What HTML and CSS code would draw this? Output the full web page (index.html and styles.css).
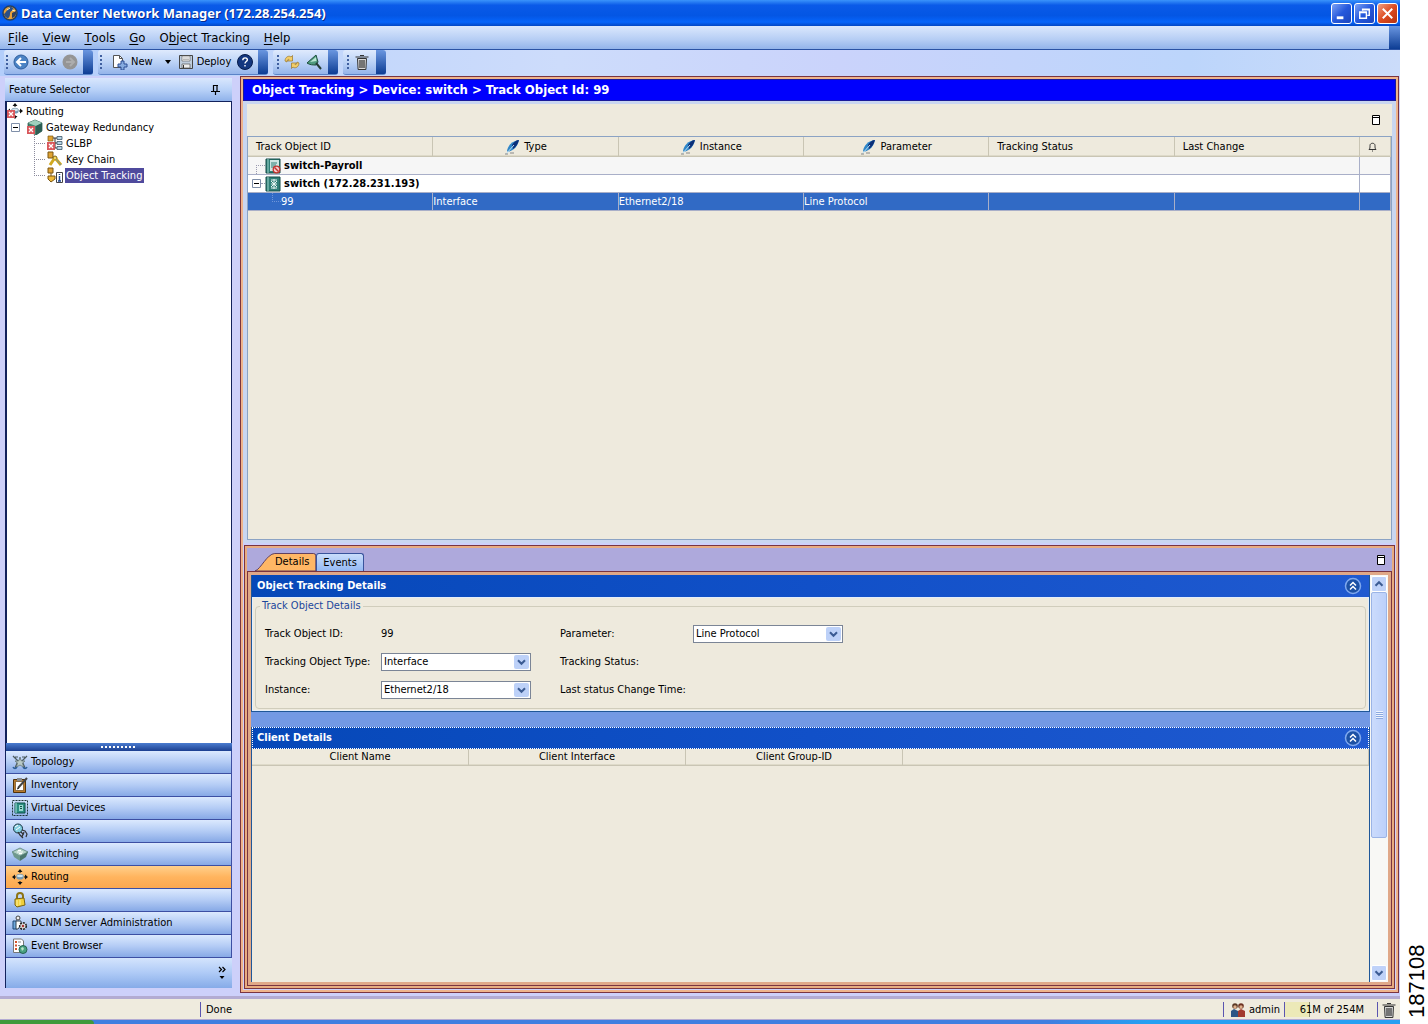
FILE: index.html
```html
<!DOCTYPE html>
<html lang="en">
<head>
  <meta charset="UTF-8" />
  <meta name="viewport" content="width=device-width, initial-scale=1" />
  <title>Data Center Network Manager (172.28.254.254)</title>
  <link rel="stylesheet" href="styles.css">
</head>
<body>
  <!-- shared icons -->
  <svg class="sprite" aria-hidden="true">
    <symbol id="i-feather" viewBox="0 0 16 16">
      <path d="M3 12C4 6 8 2 15 1C14 6 11 11 4 13Z" fill="#2f86c8"/>
      <path d="M8 6C10 3 12 1 15 1C14 5 12 8 9 10Z" fill="#0b2f78"/>
      <path d="M2 15L10 6" stroke="#bfe2f5" stroke-width="1"/>
      <path d="M1 15h3M6 14h4" stroke="#888"/>
    </symbol>
    <symbol id="i-max" viewBox="0 0 10 12">
      <path d="M1.5 1.5h7v9h-7z" fill="#fff" stroke="#000"/>
      <path d="M1 3.5h8" stroke="#000"/>
    </symbol>
    <symbol id="i-chev" viewBox="0 0 16 16">
      <path d="M4 6l4 4 4-4" fill="none" stroke="#3c5c94" stroke-width="2.4"/>
    </symbol>
    <symbol id="i-collapse" viewBox="0 0 18 18">
      <circle cx="9" cy="9" r="7.5" fill="#1c51a5" stroke="#7fa8ee" stroke-width="1.5"/>
      <path d="M6 8.5l3-3 3 3M6 12.5l3-3 3 3" fill="none" stroke="#fff" stroke-width="1.5"/>
    </symbol>
    <symbol id="i-bad" viewBox="0 0 8 8">
      <path d="M0 0h8v8H0z" fill="#d9585c"/>
      <path d="M2 2l4 4M6 2l-4 4" stroke="#fff" stroke-width="1.3"/>
    </symbol>
    <symbol id="i-minus" viewBox="0 0 9 9">
      <path d="M.5.5h8v8h-8z" fill="#fff" stroke="#7f8fa9"/>
      <path d="M2 4.5h5" stroke="#000"/>
    </symbol>
    <symbol id="i-routing" viewBox="0 0 16 16">
      <path d="M8 0l2.500 3h-5zM8 16l2.500-3h-5zM0 8l3-2.500v5zM16 8l-3-2.500v5z" fill="#111"/>
      <path d="M8 2v2M8 12v2M2 8h2M12 8h2" stroke="#111"/>
      <ellipse cx="8" cy="7" rx="3.500" ry="1.800" fill="#d3e6ee" stroke="#6b8ba0" stroke-width=".7"/>
      <path d="M4.500 7v2c1 2 6 2 7 0V7c-1 2-6 2-7 0z" fill="#7398b4"/>
    </symbol>
    <symbol id="i-trash" viewBox="0 0 16 16">
      <path d="M3.500 4.500h9l-.6 11H4.100z" fill="#d8d8d8" stroke="#333"/>
      <path d="M1.500 3h13M6 1.500h4M6 6v8M8 6v8M10 6v8" stroke="#333" stroke-width="1.200"/>
    </symbol>
  </svg>

  <div class="page">
    <div class="app">
      <header class="titlebar">
        <svg class="icon" viewBox="0 0 16 16">
          <circle cx="8" cy="8" r="7" fill="#e9a23a" stroke="#26405f" stroke-width="1.500"/>
          <path d="M2 9c2-1 3-5 6-7 3 0 4 2 3 3S8 6 8 9s-2 5-3 4-3-2-3-4z" fill="#2b4f86"/>
          <path d="M10 8l4-2c1 3-1 6-4 7z" fill="#30415e"/>
          <path d="M5 5l3-2M10 5l3 1" stroke="#fff3b8"/>
        </svg>
        <h1>Data Center Network Manager (172.28.254.254)</h1>
        <button class="win-btn" aria-label="Minimize"><svg viewBox="0 0 20 20"><path d="M5 14.500h7" stroke="#fff" stroke-width="3"/></svg></button>
        <button class="win-btn" aria-label="Restore"><svg viewBox="0 0 20 20"><path d="M8 7V5.500h7V12h-2M5 8.500h7V15H5zM5 9h7M8 6h7" fill="none" stroke="#fff" stroke-width="1.500"/></svg></button>
        <button class="win-btn close" aria-label="Close"><svg viewBox="0 0 20 20"><path d="M5 5l10 10M15 5L5 15" stroke="#fff" stroke-width="2"/></svg></button>
      </header>

      <nav class="menubar">
        <button><u>F</u>ile</button>
        <button><u>V</u>iew</button>
        <button><u>T</u>ools</button>
        <button><u>G</u>o</button>
        <button>O<u>b</u>ject Tracking</button>
        <button><u>H</u>elp</button>
      </nav>

      <div class="toolbar">
        <div class="tool-group">
          <button><svg class="icon" viewBox="0 0 16 16"><circle cx="8" cy="8" r="7" fill="#4b83c4" stroke="#2f5f9d"/><path d="M13 8H4M8 4L4 8l4 4" fill="none" stroke="#fff" stroke-width="2"/></svg>Back</button>
          <button aria-label="Forward"><svg class="icon" viewBox="0 0 16 16"><circle cx="8" cy="8" r="7.500" fill="#959595"/><path d="M4 8h8M8 4l4 4-4 4" fill="none" stroke="#adadad" stroke-width="2"/></svg></button>
        </div>
        <div class="tool-group wide">
          <button><svg class="icon" viewBox="0 0 16 16"><path d="M1.500 1.500h6l3 3v9h-9z" fill="#fff" stroke="#555"/><path d="M7.500 1.500v3h3" fill="none" stroke="#555"/><path d="M9 7h3v3h3v3h-3v3H9v-3H6v-3h3z" fill="#86abe0" stroke="#2c4f96"/></svg>New</button>
          <button class="drop" aria-label="New options"><svg viewBox="0 0 6 4"><path d="M0 0h6L3 4z" fill="#000"/></svg></button>
          <button><svg class="icon" viewBox="0 0 16 16"><path d="M1.500 1.500h13v13h-13z" fill="#bfcddd" stroke="#444"/><path d="M4 2h8v5H4z" fill="#fff" stroke="#666" stroke-width=".7"/><path d="M5 4h6M5 5.500h6" stroke="#888" stroke-width=".6"/><path d="M4 10h8v4H4z" fill="#eee" stroke="#555" stroke-width=".7"/><path d="M5.500 11v3" stroke="#333"/></svg>Deploy</button>
          <button aria-label="Help"><svg class="icon" viewBox="0 0 16 16"><circle cx="8" cy="8" r="7.500" fill="#14377f" stroke="#071c4b"/><path d="M5.800 6.200c0-3 4.600-3 4.600-.4C10.400 7.500 8 7.500 8 9.500M8 11v1.500" fill="none" stroke="#fff" stroke-width="1.400"/></svg></button>
        </div>
        <div class="tool-group tight">
          <button aria-label="Refresh"><svg class="icon" viewBox="0 0 16 16"><path d="M1 7c0-4 4-6 6-4l1.500-1.500V7H3.500L5 5.500C4 5 3 6 3 8zM15 9c0 4-4 6-6 4l-1.500 1.500V9h5L11 10.500c1 .5 2-.5 2-2.500z" fill="#f3ce68" stroke="#9a7426" stroke-width=".7"/></svg></button>
          <button aria-label="Filter"><svg class="icon" viewBox="0 0 16 16"><path d="M1 9L10 1l2 7-2 3c-3 0-6 0-9-2z" fill="#4f9a7e" stroke="#1e4f3c"/><path d="M4 8l6-5 .500 4z" fill="#b9e6d2"/><path d="M10 9l5 6" stroke="#243c35" stroke-width="2"/></svg></button>
        </div>
        <div class="tool-group tight">
          <button aria-label="Delete"><svg class="icon"><use href="#i-trash"/></svg></button>
        </div>
      </div>

      <div class="workspace">
        <aside class="sidebar">
          <div class="sidebar-head">
            <span>Feature Selector</span>
            <svg class="pin" viewBox="0 0 9 10"><path d="M2 .5h5M2.500 0v6M6 0v6M0 6.500h9M4.500 7v3" fill="none" stroke="#000" stroke-width="1.200"/></svg>
          </div>
          <ul class="tree">
            <li><svg class="icon"><use href="#i-routing"/><use href="#i-bad" y="7" width="8" height="8"/></svg><span>Routing</span></li>
            <li class="branch"><svg class="expander"><use href="#i-minus"/></svg><svg class="icon" viewBox="0 0 16 16"><path d="M1 4l7-3 7 3v8l-6 4-8-4z" fill="#44816d" stroke="#1d4a3f" stroke-width=".7"/><path d="M1 4l7-3 7 3-6 3z" fill="#9fd0bd"/><path d="M9 7l6-3v8l-6 4z" fill="#2c5f55"/><use href="#i-bad" y="7" width="8" height="8"/></svg><span>Gateway Redundancy</span></li>
            <li class="leaf"><svg class="icon" viewBox="0 0 16 16"><path d="M1 1h5v5H1z" fill="#e0a332" stroke="#7b5713" stroke-width=".7"/><path d="M6 3h4M8 3v10h2M8 8h2" fill="none" stroke="#333"/><path d="M10 1.500h5v3h-5zM10 6.500h5v3h-5zM10 11.500h5v3h-5z" fill="#b6d3e4" stroke="#3e5568" stroke-width=".8"/><use href="#i-bad" y="7" width="8" height="8"/></svg><span>GLBP</span></li>
            <li class="leaf"><svg class="icon" viewBox="0 0 16 16"><path d="M1 1h5v6H1z" fill="#e0a332" stroke="#7b5713"/><circle cx="8" cy="7" r="2" fill="#f5d861" stroke="#7d6312"/><path d="M7 8l-4 6M9 8l5 6" stroke="#d1a91f" stroke-width="3"/><path d="M9 8l5 6" stroke="#78929b" stroke-width="1"/></svg><span>Key Chain</span></li>
            <li class="leaf"><svg class="icon" viewBox="0 0 16 16"><path d="M1 1h5v5H1z" fill="#e0a332" stroke="#7b5713"/><path d="M4 6v3M1 9h7v3l-4 3-3-3z" fill="#efb938" stroke="#7b5713"/><path d="M9.500 5.500h6v10h-6z" fill="#fff" stroke="#444"/><path d="M12.500 7v1M12.500 9v5M11 14h3" stroke="#204a96" stroke-width="1.500"/></svg><span class="selected">Object Tracking</span></li>
          </ul>
          <div class="splitter"></div>
          <div class="features">
            <button><svg class="icon" viewBox="0 0 16 16"><path d="M1 2l5 5-3 7M15 2l-5 5 3 7M6 7h4M8 3v4M3 3h3M13 3h-3" fill="none" stroke="#4b5a5d" stroke-width="1.200"/><path d="M8 4l1.500 3L13 7l-2.500 2 1 4L8 11l-3.500 2 1-4L3 7h3.500z" fill="#b9c9c6" stroke="#677" stroke-width=".8"/><path d="M1 13c1 2 3 2 4 0M11 13c1 2 3 2 4 0" fill="none" stroke="#2c5f9a" stroke-width="1.500"/></svg>Topology</button>
            <button><svg class="icon" viewBox="0 0 16 16"><path d="M1.500 2.500h12v13h-12z" fill="#b87a2c" stroke="#4f320c"/><path d="M3.500 4.500h8v9h-8z" fill="#fff" stroke="#6d4b1c" stroke-width=".7"/><path d="M5 1h5v3H5z" fill="#8a8a8a"/><path d="M6 11l9-10" stroke="#444" stroke-width="2"/><path d="M5 12l2-1" stroke="#111"/></svg>Inventory</button>
            <button><svg class="icon" viewBox="0 0 16 16"><path d="M.5.5h15v15H.5z" fill="none" stroke="#1c3535" stroke-dasharray="2 1"/><path d="M3 3h10v10H3z" fill="#2b8f83" stroke="#0e5048"/><path d="M4 3v10" stroke="#a9e8df"/><path d="M7 5h4v6H7z" fill="#9ad8d0"/><path d="M8 6.500h2M8 8.500h2" stroke="#0e5048"/></svg>Virtual Devices</button>
            <button><svg class="icon" viewBox="0 0 16 16"><circle cx="6" cy="5.500" r="4.500" fill="#83cfe0" stroke="#152f3c"/><path d="M3 4l3-2M4 7l4-3" stroke="#fff"/><path d="M6 9l2 3 3 3M9 9l2 2-1 3M10 7l3 1 2 3-1 3M12 9l-1 3" fill="none" stroke="#333" stroke-width="1.200"/></svg>Interfaces</button>
            <button><svg class="icon" viewBox="0 0 16 16"><path d="M0 6l8-4 8 4-8 4z" fill="#b4d3c7" stroke="#4c7469" stroke-width=".7"/><path d="M0 6l8 4v5L2 11z" fill="#6f998d"/><path d="M16 6l-8 4v5l6-4z" fill="#4b776d"/><path d="M5 6h6M6 4.500h3M7 7.500h3" stroke="#fff"/></svg>Switching</button>
            <button class="active"><svg class="icon"><use href="#i-routing"/></svg>Routing</button>
            <button><svg class="icon" viewBox="0 0 16 16"><path d="M5 8V4c0-4 6-4 6 0v4" fill="none" stroke="#8d7415" stroke-width="2"/><path d="M3 7l9-1 1 7-8 2-2-2z" fill="#f0cf3c" stroke="#7b6412"/><path d="M5 8v6M8 8v5" stroke="#fff3a0"/></svg>Security</button>
            <button><svg class="icon" viewBox="0 0 16 16"><path d="M1 6h4v8H1z" fill="#6fa8dc" stroke="#1f4777"/><circle cx="6" cy="3" r="2" fill="#eee" stroke="#444"/><path d="M4 6h5v4l-3 4H4z" fill="#fff" stroke="#345"/><circle cx="11" cy="11" r="3.300" fill="#ddd" stroke="#222" stroke-width="1.600" stroke-dasharray="2 1"/><circle cx="11" cy="11" r="1.200" fill="#a33"/></svg>DCNM Server Administration</button>
            <button><svg class="icon" viewBox="0 0 16 16"><path d="M1.500 1h8l2 2v11.500h-10z" fill="#fff" stroke="#777"/><path d="M3 4h2M3 7.500h2M3 11h2" stroke="#d4542c" stroke-width="2"/><path d="M6 4h3M6 7.500h2" stroke="#888"/><circle cx="11" cy="11.500" r="4" fill="#4aa181" stroke="#25634f"/><path d="M9 10l2-1 1 2-2 2z" fill="#b9e6c6"/></svg>Event Browser</button>
          </div>
          <div class="features-foot">
            <button aria-label="More features"><svg viewBox="0 0 8 14"><path d="M1 1l2.500 2.500L1 6M4.500 1L7 3.500 4.500 6" fill="none" stroke="#000" stroke-width="1.200"/><path d="M1.500 10h5L4 13z" fill="#000"/></svg></button>
          </div>
        </aside>

        <main class="main">
          <h2 class="crumb">Object Tracking &gt; Device: switch &gt; Track Object Id: 99</h2>

          <section class="upper">
            <div class="upper-bar">
              <button class="max-btn" aria-label="Maximize"><svg><use href="#i-max"/></svg></button>
            </div>
            <div class="grid-box">
              <table class="objects">
                <colgroup><col><col><col><col><col><col><col class="bell-col"></colgroup>
                <thead>
                  <tr>
                    <th>Track Object ID</th>
                    <th class="editable"><svg><use href="#i-feather"/></svg>Type</th>
                    <th class="editable"><svg><use href="#i-feather"/></svg>Instance</th>
                    <th class="editable"><svg><use href="#i-feather"/></svg>Parameter</th>
                    <th>Tracking Status</th>
                    <th>Last Change</th>
                    <th><svg class="bell" viewBox="0 0 9 10"><path d="M1 7.500c1-1 1-2 1-4 0-3 5-3 5 0 0 2 0 3 1 4zM4 9h1" fill="none" stroke="#333"/></svg></th>
                  </tr>
                </thead>
                <tbody>
                  <tr class="device alt">
                    <td colspan="6"><div class="cell"><i class="twig"></i><svg class="icon" viewBox="0 0 16 16"><path d="M1 1h14v14H1z" fill="#2f7f77" stroke="#164d49"/><path d="M3 1v14" stroke="#9fd6cd"/><path d="M5 2h9v11H5z" fill="#cfe6e2"/><path d="M6 5h6M6 7h5M6 9h3" stroke="#2f7f77"/><circle cx="11.500" cy="11.500" r="3.300" fill="#f6c9c9" stroke="#c2342f" stroke-width="1.300"/><path d="M9.500 9.500l4 4" stroke="#c2342f" stroke-width="1.500"/></svg>switch-Payroll</div></td>
                    <td></td>
                  </tr>
                  <tr class="device">
                    <td colspan="6"><div class="cell"><svg class="expander"><use href="#i-minus"/></svg><i class="dash"></i><svg class="icon" viewBox="0 0 16 16"><path d="M1 1h14v14H1z" fill="#2f7f77" stroke="#164d49"/><path d="M3 1v14" stroke="#9fd6cd"/><path d="M6 4h6M6 12h6M9 3v10M6 8h6M6 5l6 6M12 5l-6 6" stroke="#e8f6f3"/></svg>switch (172.28.231.193)</div></td>
                    <td></td>
                  </tr>
                  <tr class="picked">
                    <td><div class="cell"><i class="elbow"></i>99</div></td>
                    <td>Interface</td>
                    <td>Ethernet2/18</td>
                    <td>Line Protocol</td>
                    <td></td>
                    <td></td>
                    <td></td>
                  </tr>
                </tbody>
              </table>
            </div>
          </section>

          <section class="lower">
            <div class="tabs">
              <button class="tab current"><svg viewBox="0 0 62 19" preserveAspectRatio="none"><path d="M0 19C6 17 12 1 20 .5H59Q61.500.5 61.500 3V19z" fill="#ffb765" stroke="#5a3a5a"/></svg><span>Details</span></button>
              <button class="tab">Events</button>
              <button class="max-btn" aria-label="Maximize"><svg><use href="#i-max"/></svg></button>
            </div>
            <div class="lower-body">
              <div class="cards">
                <div class="card">
                  <div class="card-head">
                    <h3>Object Tracking Details</h3>
                    <button aria-label="Collapse"><svg><use href="#i-collapse"/></svg></button>
                  </div>
                  <form class="card-form">
                    <fieldset>
                      <legend>Track Object Details</legend>
                      <div class="fields">
                        <span>Track Object ID:</span>
                        <span>99</span>
                        <label for="param">Parameter:</label>
                        <span class="combo"><select id="param"><option>Line Protocol</option></select><svg><use href="#i-chev"/></svg></span>
                        <label for="type">Tracking Object Type:</label>
                        <span class="combo"><select id="type"><option>Interface</option></select><svg><use href="#i-chev"/></svg></span>
                        <span>Tracking Status:</span>
                        <span></span>
                        <label for="inst">Instance:</label>
                        <span class="combo"><select id="inst"><option>Ethernet2/18</option></select><svg><use href="#i-chev"/></svg></span>
                        <span>Last status Change Time:</span>
                        <span></span>
                      </div>
                    </fieldset>
                  </form>
                </div>
                <div class="card grow">
                  <div class="card-head focused">
                    <h3>Client Details</h3>
                    <button aria-label="Collapse"><svg><use href="#i-collapse"/></svg></button>
                  </div>
                  <table class="clients">
                    <colgroup><col class="c"><col class="c"><col class="c"><col></colgroup>
                    <thead>
                      <tr><th>Client Name</th><th>Client Interface</th><th>Client Group-ID</th><th></th></tr>
                    </thead>
                  </table>
                </div>
              </div>
              <div class="scrollbar">
                <button class="scroll-btn up" aria-label="Scroll up"><svg><use href="#i-chev"/></svg></button>
                <div class="track"><div class="thumb"><i></i></div></div>
                <button class="scroll-btn" aria-label="Scroll down"><svg><use href="#i-chev"/></svg></button>
              </div>
            </div>
          </section>
        </main>
      </div>

      <footer class="statusbar">
        <span class="state">Done</span>
        <span class="user"><svg class="icon" viewBox="0 0 16 16"><circle cx="5" cy="4" r="2.800" fill="#5b3a26"/><circle cx="11" cy="4" r="2.800" fill="#6c3322"/><circle cx="5" cy="5" r="1.700" fill="#e0b08c"/><circle cx="11" cy="5" r="1.700" fill="#e0b08c"/><path d="M8 15V9l3-2 4 2v6z" fill="#a33a2e"/><path d="M1 15V9l3-2 4 2v6z" fill="#2c5686"/></svg>admin</span>
        <span class="memory">61M of 254M</span>
        <button aria-label="Collect garbage"><svg class="icon"><use href="#i-trash"/></svg></button>
      </footer>
      <div class="taskbar"><i></i></div>
    </div>
    <div class="figure-no">187108</div>
  </div>
</body>
</html>
```
FILE: styles.css
```css
* {
  box-sizing: border-box;
}

body {
  margin: 0;
  background: #fff;
  color: #000;
  font: 11px/16px "DejaVu Sans Condensed", "DejaVu Sans", sans-serif;
}

button {
  display: flex;
  align-items: center;
  margin: 0;
  padding: 0;
  border: 0;
  background: none;
  color: inherit;
  font: inherit;
}

h1, h2, h3 {
  margin: 0;
}

svg {
  display: block;
  flex: none;
}

.sprite {
  position: absolute;
  width: 0;
  height: 0;
}

.icon {
  width: 16px;
  height: 16px;
}

.page {
  display: flex;
  height: 100vh;
}

.app {
  flex: 1;
  min-width: 0;
  display: flex;
  flex-direction: column;
  background: #cdd0fa;
}

.figure-no {
  width: 28px;
  padding: 6px 7px 0 0;
  writing-mode: vertical-rl;
  transform: rotate(180deg);
  font: 22px/20px "Liberation Sans", sans-serif;
}

/* title, menu and tool bars */
.titlebar {
  display: flex;
  align-items: center;
  gap: 2px;
  height: 26px;
  padding: 0 2px;
  background: linear-gradient(#3a93fb, #0a5ae8 20%, #0456e4 60%, #0665fb 85%, #0347c4);
  color: #fff;
}

.titlebar h1 {
  flex: 1;
  padding-left: 1px;
  font: bold 13px/20px "Noto Sans", sans-serif;
  text-shadow: 1px 1px #0a2a8a;
}

.win-btn {
  width: 21px;
  height: 21px;
  border: 1px solid #fff;
  border-radius: 3px;
  background: linear-gradient(135deg, #7da2f5, #2558dc 50%, #1c45bd);
}

.win-btn.close {
  background: linear-gradient(135deg, #f0a083, #dd4b20 50%, #b5320f);
}

.menubar {
  display: flex;
  align-items: center;
  gap: 14px;
  height: 24px;
  padding-left: 8px;
  border-bottom: 1px solid #2b53a4;
  background:
    linear-gradient(#6a96e0, #0d3d94) right / 11px 100% no-repeat,
    linear-gradient(#dbe8fd, #b5cdf4 60%, #93b4ea);
  font-size: 13px;
}

.menubar u {
  text-underline-offset: 2px;
}

.toolbar {
  display: flex;
  gap: 5px;
  height: 26px;
  padding: 0 4px 1px;
  background: linear-gradient(90deg, #b3cefb, #cddcfb 40%, #cad3fb 60%, #bcd5fb 85%, #cbdcfa);
}

.tool-group {
  display: flex;
  align-items: center;
  gap: 6px;
  padding: 0 15px 0 2px;
  border-bottom: 1px solid #5b83c7;
  border-radius: 3px;
  background:
    linear-gradient(#6a96e0, #0d3d94) right / 10px 100% no-repeat,
    linear-gradient(#dfeafd, #bcd3f6 50%, #95b5ea);
}

.tool-group::before {
  content: "";
  width: 2px;
  height: 15px;
  margin-right: -1px;
  background: repeating-linear-gradient(#3f5f9f 0 2px, transparent 2px 4px);
}

.tool-group button {
  gap: 3px;
}

.tool-group .drop {
  padding: 0 1px 0 6px;
}

.drop svg {
  width: 6px;
  height: 4px;
}

.tool-group.wide::before {
  margin-right: 4px;
}

.tool-group.tight {
  padding: 0 16px 0 4px;
}

/* left column */
.workspace {
  flex: 1;
  min-height: 0;
  display: flex;
}

.sidebar {
  width: 240px;
  flex: none;
  display: flex;
  flex-direction: column;
  padding: 2px 8px 8px 5px;
}

.sidebar-head {
  display: flex;
  align-items: center;
  justify-content: space-between;
  height: 23px;
  padding: 0 12px 0 4px;
  background: linear-gradient(#d9e7fd, #b9d2f8 50%, #8fb2ea);
}

.pin {
  width: 9px;
  height: 10px;
}

.tree {
  flex: 1;
  min-height: 0;
  margin: 0;
  padding: 1px 0 0;
  border: solid #12225c;
  border-width: 1px 1px 0 2px;
  background: #fff;
  list-style: none;
}

.tree li {
  display: flex;
  align-items: center;
  gap: 2px;
  height: 16px;
}

.tree span {
  padding: 0 2px 0 1px;
  line-height: 15px;
}

.tree .selected {
  background: #4f4a9d;
  color: #fff;
}

.tree .branch {
  padding-left: 4px;
}

.branch .expander {
  margin-right: 5px;
}

.expander {
  width: 9px;
  height: 9px;
}

.tree .leaf {
  margin-left: 27px;
  background: repeating-linear-gradient(#8a8a9c 0 1px, transparent 1px 2px) left top / 1px 100% no-repeat;
}

.tree .leaf:last-child {
  background-size: 1px 8px;
}

.leaf::before {
  content: "";
  width: 11px;
  border-top: 1px dotted #8a8a9c;
}

.splitter {
  height: 8px;
  border-left: 1px solid #12225c;
  background: linear-gradient(#4a7cd0, #1b3f90);
}

.splitter::before {
  content: "";
  display: block;
  width: 36px;
  height: 2px;
  margin: 3px auto;
  background: repeating-linear-gradient(90deg, #fff 0 2px, transparent 2px 4px);
}

.features {
  border-left: 1px solid #12225c;
}

.features button {
  gap: 3px;
  width: 100%;
  height: 23px;
  padding-left: 6px;
  border: solid #3c4fa3;
  border-width: 0 1px 1px 0;
  background: linear-gradient(#dbe9fe, #b4ccf5 50%, #87a9e6);
}

.features .active {
  background: linear-gradient(#ffd08c, #ffb45e 50%, #fba850);
}

.features-foot {
  display: flex;
  justify-content: flex-end;
  height: 30px;
  padding-right: 6px;
  border-left: 1px solid #12225c;
  background: linear-gradient(#d4e4fd, #aecaf6 50%, #86abe8);
}

.features-foot svg {
  width: 8px;
  height: 14px;
}

/* right column */
.main {
  flex: 1;
  min-width: 0;
  display: flex;
  flex-direction: column;
  margin: 0 1px 3px 0;
  border: 1px solid #7a3440;
  box-shadow: inset 0 0 0 2px #efb48c;
  padding: 2px;
}

.crumb {
  height: 22px;
  padding-left: 8px;
  border: 1px solid #1a1a9a;
  background: #0000fd;
  color: #fff;
  font-size: 13px;
  font-weight: bold;
  line-height: 20px;
}

.upper {
  flex: 1;
  min-height: 0;
  display: flex;
  flex-direction: column;
  border: solid #c9d6f0;
  border-width: 3px 4px;
  background: #eeeadd;
}

.upper-bar {
  display: flex;
  justify-content: flex-end;
  align-items: center;
  height: 32px;
  padding-right: 11px;
}

.max-btn svg {
  width: 10px;
  height: 12px;
}

.grid-box {
  flex: 1;
  min-height: 0;
  border: 1px solid #8ba3c4;
}

table {
  width: 100%;
  table-layout: fixed;
  border-collapse: separate;
  border-spacing: 0;
}

th {
  border: solid #c9c5b4;
  border-width: 0 1px 1px 0;
  box-shadow: inset 0 -1px #dedac9;
  background: #eeeadd;
  font-weight: normal;
}

td {
  padding: 0;
}

.bell-col {
  width: 31px;
}

.objects th {
  height: 20px;
  padding: 0 8px;
  text-align: left;
}

.objects .editable {
  text-align: center;
}

.editable svg {
  display: inline-block;
  width: 16px;
  height: 16px;
  margin-right: 4px;
  vertical-align: middle;
}

.bell {
  width: 9px;
  height: 10px;
}

.objects td {
  height: 18px;
  border: solid #a9afc8;
  border-width: 0 1px 1px 0;
  background: #fff;
}

.objects .alt td {
  background: #f6f6f6;
}

.objects .picked td {
  background: #316ac5;
  color: #fff;
}

.cell {
  display: flex;
  align-items: center;
  height: 17px;
}

.device .cell {
  padding-left: 4px;
  font-weight: bold;
}

.device .icon {
  margin-right: 3px;
}

.twig {
  width: 9px;
  height: 9px;
  align-self: flex-end;
  margin-left: 4px;
  border: dotted #9a9ab0;
  border-width: 1px 0 0 1px;
}

.dash {
  width: 4px;
  border-top: 1px dotted #9a9ab0;
}

.elbow {
  width: 9px;
  height: 9px;
  align-self: flex-start;
  margin-left: 24px;
  border: dotted #6f95d8;
  border-width: 0 0 1px 1px;
}

.lower {
  height: 444px;
  flex: none;
  display: flex;
  flex-direction: column;
  margin: 2px 1px 1px;
  border: 1px solid #7a3440;
  padding: 2px;
  background: #e8ac80;
}

.tabs {
  display: flex;
  align-items: flex-end;
  height: 23px;
  padding: 0 6px 0 8px;
  background: #aea9dc;
}

.tab {
  height: 18px;
  padding: 0 6px;
  border: 1px solid #39549c;
  border-bottom: 0;
  border-radius: 3px 3px 0 0;
  background: linear-gradient(#c9ddfc, #94b9f3);
}

.tab.current {
  position: relative;
  height: 18px;
  padding: 0 7px 0 20px;
  border: 0;
  background: none;
}

.tab.current svg {
  position: absolute;
  inset: 0;
  width: 100%;
  height: 100%;
}

.tab.current span {
  position: relative;
}

.tabs .max-btn {
  align-self: center;
  margin-left: auto;
}

.lower-body {
  flex: 1;
  min-height: 0;
  display: flex;
  border: 1px solid #7a3440;
  box-shadow: inset 0 0 0 3px #e0a888;
  padding: 3px;
}

.cards {
  flex: 1;
  min-width: 0;
  display: flex;
  flex-direction: column;
  gap: 15px;
  background: #7399e4;
}

.card {
  border: 1px solid #1f5799;
  border-top: 0;
  background: #eeeadd;
}

.card.grow {
  flex: 1;
  border-bottom: 0;
}

.card-head {
  display: flex;
  align-items: center;
  justify-content: space-between;
  height: 22px;
  padding: 0 7px 0 5px;
  background: linear-gradient(90deg, #0648b8, #1150c8 50%, #205ad0);
  color: #fff;
}

.card-head h3 {
  font-size: 11px;
}

.card-head svg {
  width: 18px;
  height: 18px;
}

.card-head.focused {
  outline: 1px dotted #fff;
  outline-offset: -1px;
}

.card-form {
  padding: 0 2px 1px;
  border: 1px solid #e4eefa;
}

fieldset {
  margin: 0;
  padding: 0 9px 4px;
  border: 1px solid #d0cdbc;
  border-radius: 4px;
}

legend {
  margin-left: -5px;
  padding: 0 2px;
  color: #1c479c;
}

.fields {
  display: grid;
  grid-template-columns: 116px 179px 133px 150px;
  grid-auto-rows: 28px;
  align-items: center;
  padding-top: 6px;
}

.combo {
  position: relative;
  width: 150px;
  height: 18px;
}

.combo select {
  appearance: none;
  width: 100%;
  height: 18px;
  padding: 0 18px 0 2px;
  border: 1px solid #7b8596;
  border-radius: 0;
  background: #fff;
  color: #000;
  font: inherit;
}

.combo svg {
  position: absolute;
  top: 2px;
  right: 2px;
  width: 15px;
  height: 14px;
  border-radius: 2px;
  background: #bdd1f8;
  pointer-events: none;
}

.clients th {
  height: 17px;
  padding: 0;
}

.clients .c {
  width: 217px;
}

.scrollbar {
  display: flex;
  flex-direction: column;
  width: 18px;
  padding: 1px;
  background: #f8f8f5;
}

.scroll-btn {
  justify-content: center;
  height: 16px;
  border: 1px solid #fff;
  border-radius: 2px;
  background: #bfd2f9;
}

.scroll-btn svg {
  width: 14px;
  height: 14px;
}

.scroll-btn.up svg {
  transform: rotate(180deg);
}

.track {
  flex: 1;
}

.thumb {
  display: flex;
  align-items: center;
  justify-content: center;
  height: 66%;
  border: 1px solid #9bb4e6;
  border-radius: 2px;
  background: linear-gradient(90deg, #cbdbfc, #bcd0fa);
}

.thumb i {
  width: 7px;
  height: 8px;
  background: repeating-linear-gradient(#eef4fe 0 1px, #8ca9e0 1px 2px);
}

/* bottom */
.statusbar {
  display: flex;
  align-items: stretch;
  height: 24px;
  padding: 3px 0 2px 200px;
  border-top: 3px solid #b3abd2;
  border-bottom: 1px solid #b3abd2;
  background: #efebde;
}

.statusbar > * {
  display: flex;
  align-items: center;
  padding: 0 5px;
  border-left: 1px solid #5b55b0;
}

.statusbar .state {
  flex: 1;
}

.statusbar .user {
  gap: 3px;
  padding: 0 4px 0 6px;
}

.statusbar .memory {
  width: 93px;
  justify-content: flex-end;
  padding-right: 13px;
  background: linear-gradient(90deg, #ece9b8 24px, #8c8c70 24px 25px, transparent 25px);
}

.statusbar button {
  padding: 0 3px;
}

.taskbar {
  height: 4px;
  background: linear-gradient(90deg, #3f7fe0 75%, #25a0f2 82%);
}

.taskbar i {
  display: block;
  width: 94px;
  height: 4px;
  border-radius: 0 4px 0 0;
  background: #3f9a3c;
}
```
